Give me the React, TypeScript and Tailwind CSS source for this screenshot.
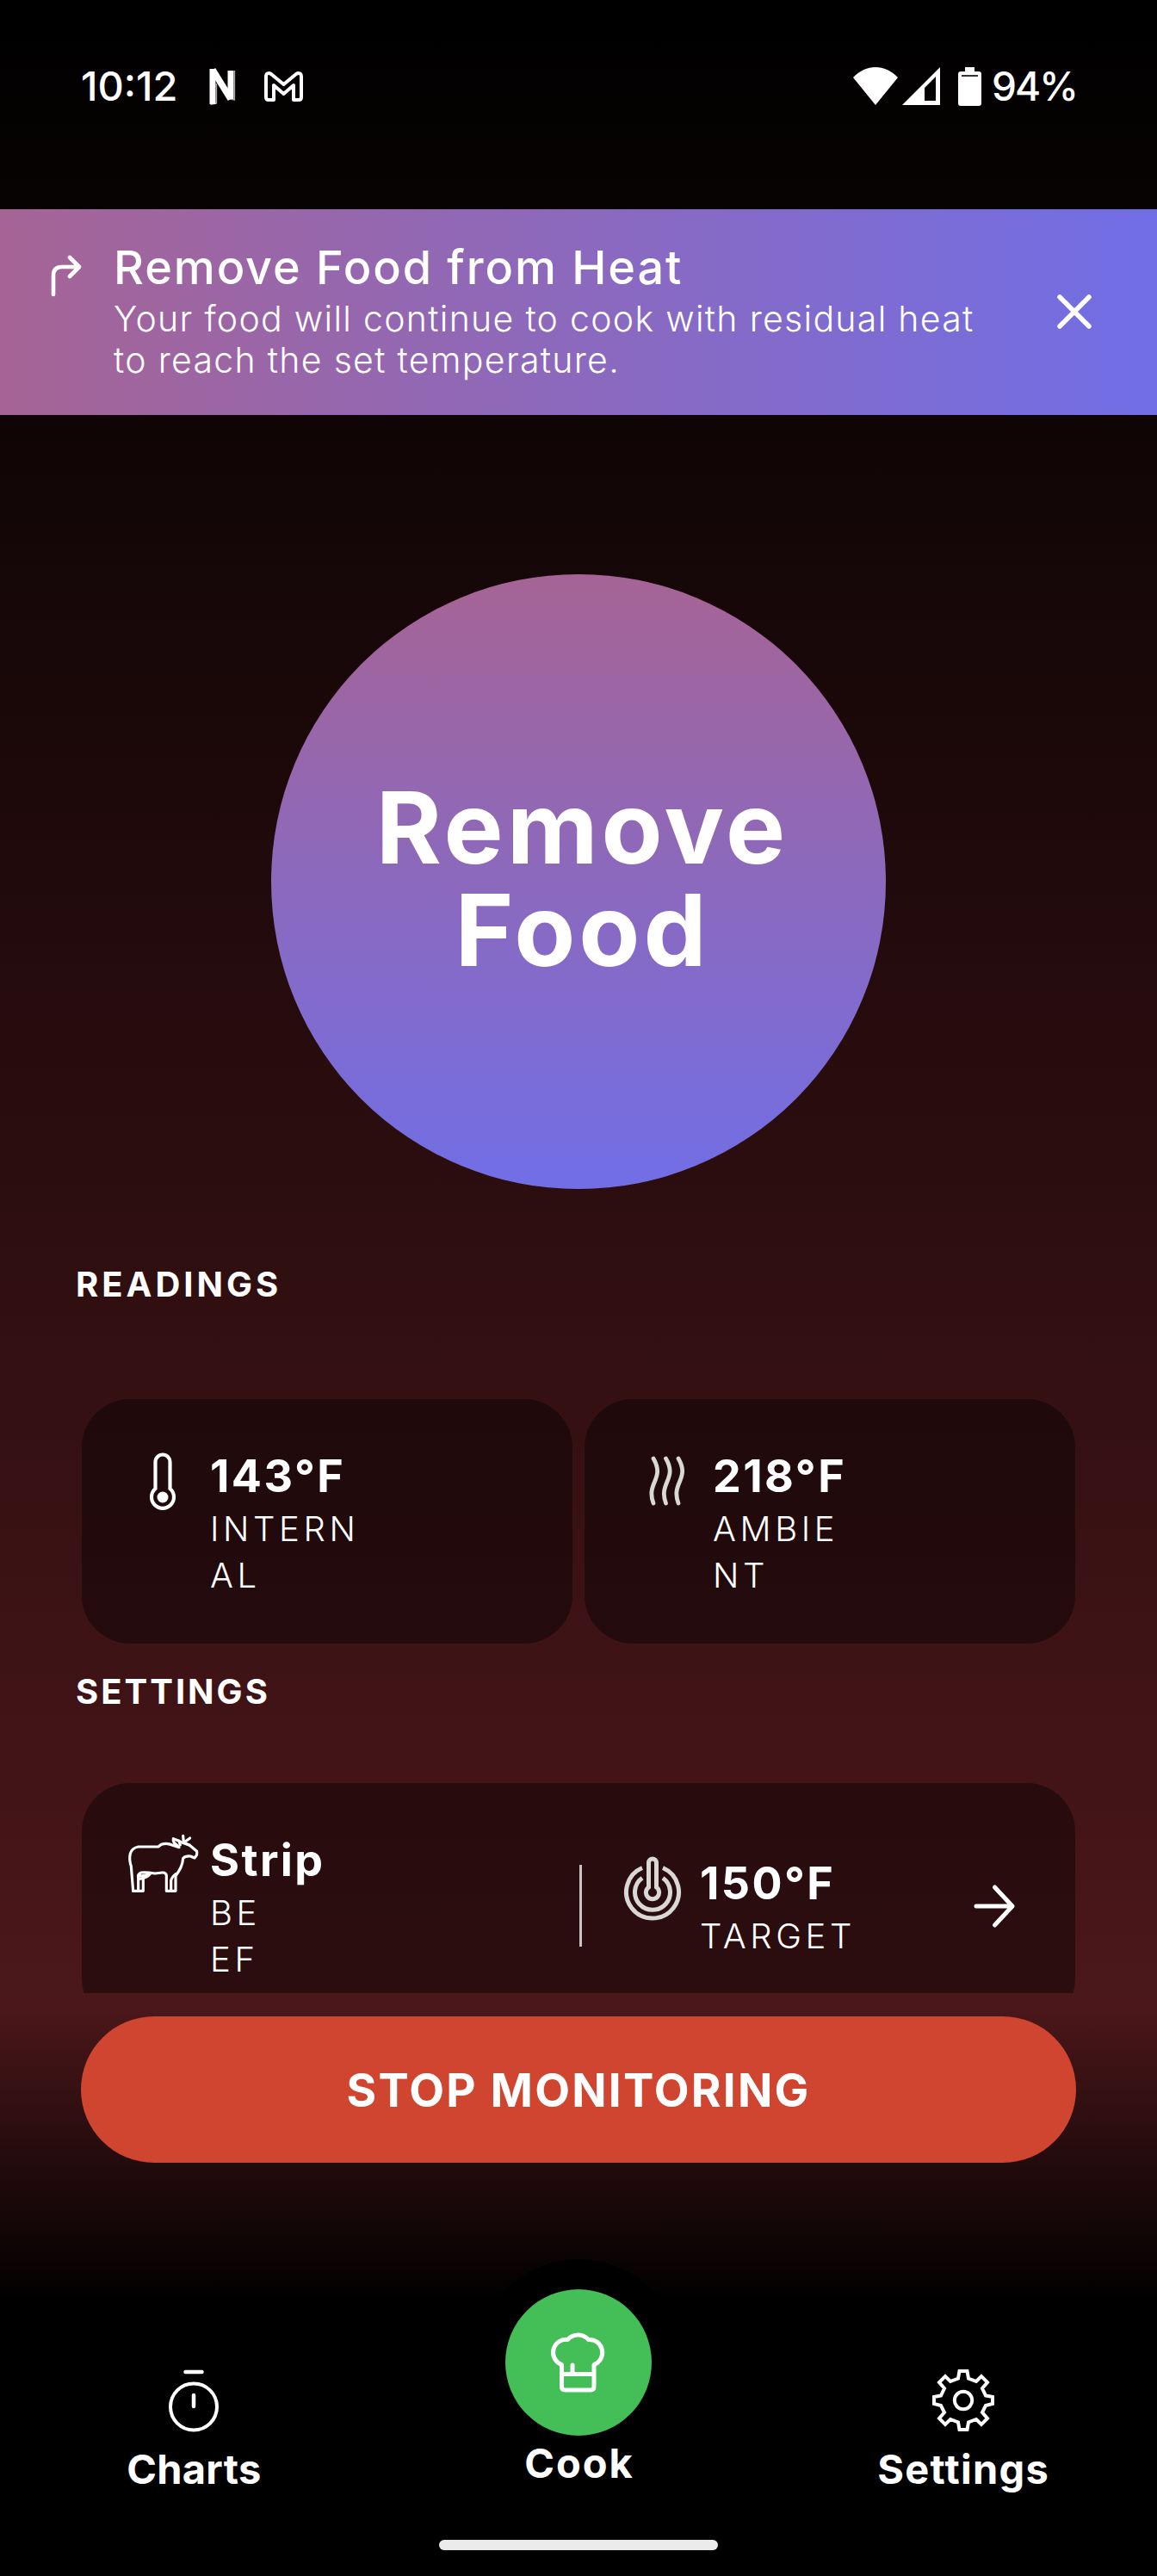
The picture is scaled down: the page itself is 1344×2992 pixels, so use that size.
import type { ReactNode } from "react";

interface ReadingProps {
  icon: ReactNode;
  value: string;
  lines: string[];
  className?: string;
}

function Reading({ icon, value, lines, className = "" }: ReadingProps) {
  return (
    <div className={`flex items-start ${className}`}>
      <div className="flex w-[110px] flex-shrink-0 justify-center">{icon}</div>
      <div className="ml-[5px] whitespace-nowrap">
        <div className="text-[52px] leading-[64px] font-bold tracking-[2.4px]">{value}</div>
        <div className="mt-[2px] text-[40px] leading-[54px] font-light tracking-[4.6px]">
          {lines.map((line) => (
            <div key={line}>{line}</div>
          ))}
        </div>
      </div>
    </div>
  );
}

function StatusBar() {
  return (
    <header className="flex h-[243px] items-start pt-[70px] pr-[95px] pl-[94px]">
      <span className="w-[147px] text-[47px] leading-[60px] font-medium">10:12</span>
      <svg className="mt-[7px] h-[48px] w-[34px]" viewBox="0 0 34 48" fill="none">
        <path d="M10.500 20v23l-7 1.500M31.500 5v34l-6-1" stroke="#aaa" strokeWidth="1.300" />
        <path d="M6 3v41M27 5v33" stroke="#fff" strokeWidth="7" />
        <path d="M6 4L27 38" stroke="#fff" strokeWidth="7.500" />
      </svg>
      <svg className="mt-[12px] ml-[31px] h-[37px] w-[47px]" viewBox="0 0 47 37" fill="none" stroke="#fff" strokeWidth="4" strokeLinejoin="round">
        <path d="M3 31V7C3 3 6 2 9 4L23.500 16L38 4C41 2 44 3 44 7V31C44 33 43 34 41 34H35V17L23.500 27L12 17V34H6C4 34 3 33 3 31Z" />
      </svg>
      <svg className="mt-[8px] ml-auto h-[44px] w-[52px]" viewBox="0 0 52 44" fill="#fff">
        <path d="M0 12C15-4 37-4 52 12L26 44Z" />
      </svg>
      <svg className="mt-[8px] ml-[5px] h-[44px] w-[44px]" viewBox="0 0 44 44" fill="#fff">
        <path fillRule="evenodd" d="M0 44L44 0V44ZM26 24V39H39V11Z" />
      </svg>
      <svg className="mt-[8px] ml-[21px] h-[45px] w-[27px]" viewBox="0 0 27 45">
        <path d="M8 0H19V5H24Q27 5 27 8V42Q27 45 24 45H3Q0 45 0 42V8Q0 5 3 5H8Z" fill="#fff" />
        <path d="M4 10H23" stroke="#333" strokeWidth="2" />
      </svg>
      <span className="ml-[12px] w-[97px] text-[46px] leading-[60px] font-medium tracking-[-2px] whitespace-nowrap">94%</span>
    </header>
  );
}

function Banner() {
  return (
    <section className="flex h-[239px] items-start bg-[linear-gradient(to_right,#a66495,#716ee6)] pl-[59px]">
      <svg className="mt-[52px] h-[50px] w-[36px]" viewBox="0 0 36 50" fill="none" stroke="#fff" strokeWidth="4.600" strokeLinecap="round" strokeLinejoin="round">
        <path d="M3 47V25Q3 15 13 15H33M22 4L33 15L22 26" />
      </svg>
      <div className="mt-[36px] ml-[37px] whitespace-nowrap">
        <h1 className="text-[54px] leading-[64px] font-medium tracking-[1.9px]">Remove Food from Heat</h1>
        <p className="mt-[3px] text-[41px] leading-[48px] font-light tracking-[1.3px]">
          Your food will continue to cook with residual heat
          <br />
          to reach the set temperature.
        </p>
      </div>
      <svg className="mt-[98px] mr-[75px] ml-auto h-[42px] w-[42px]" viewBox="0 0 42 42" stroke="#fff" strokeWidth="5.500" strokeLinecap="round">
        <path d="M4 4L38 38M38 4L4 38" />
      </svg>
    </section>
  );
}

function ThermometerIcon() {
  return (
    <svg className="mt-[3px] ml-[10px] h-[68px] w-[32px]" viewBox="0 0 32 68" fill="none">
      <path d="M7.500 43V12a8.500 8.500 0 0 1 17 0v31a13 13 0 1 1-17 0Z" stroke="#fff" strokeWidth="4.200" />
      <circle cx="16" cy="53" r="6.500" fill="#fff" />
    </svg>
  );
}

function HeatIcon() {
  return (
    <svg className="mt-[7px] ml-[13px] h-[60px] w-[44px]" viewBox="0 0 44 60" fill="none" stroke="#d9d8d5" strokeWidth="4.800" strokeLinecap="round">
      <path d="M6 4C20 28-3 32 6 56M20.500 4C34.500 28 11.500 32 20.500 56M35 4C49 28 26 32 35 56" />
    </svg>
  );
}

function CowIcon() {
  return (
    <svg className="-mt-[8px] -mr-[12px] h-[86px] w-[100px] flex-shrink-0" viewBox="0 0 300 258" fill="none" stroke="#fff" strokeWidth="9.500" strokeLinejoin="round" strokeLinecap="round">
      <path d="M44 226L37 140Q29 116 34 96Q40 76 62 72H132L142 64Q162 57 180 66L204 74L194 64Q182 56 184 44L204 52L216 58L240 66L266 88V100L258 111L244 105Q226 103 218 112C216 140 204 156 192 174V226H160V172Q158 161 146 162L120 165Q90 160 72 162Q60 166 62 180" />
      <path d="M44 226H79V184M62 180V222M64 184Q92 182 104 166M62 172Q80 176 98 168M176 222V190Q178 178 194 166" />
      <path d="M204 52L208 66M218 34L220 58L242 42M220 58L240 66" />
    </svg>
  );
}

function TargetIcon() {
  return (
    <svg className="ml-[9px] h-[76px] w-[68px]" viewBox="0 0 68 76" fill="none" stroke="#d9d8d5" strokeWidth="5">
      <path d="M22 13.500A30.500 30.500 0 1 0 46 13.500M22 25.200A20.500 20.500 0 1 0 46 25.200" />
      <path d="M29.500 36V7.500a4.500 4.500 0 0 1 9 0V36a7.600 7.600 0 1 1-9 0Z" />
    </svg>
  );
}

function TimerIcon() {
  return (
    <svg className="h-[74px] w-[60px]" viewBox="0 0 60 74" fill="none" stroke="#fff" strokeWidth="4" strokeLinecap="round">
      <circle cx="30" cy="44.500" r="27" />
      <path d="M20.500 4H39.500M30 31V44" strokeWidth="4.500" />
    </svg>
  );
}

function GearIcon() {
  return (
    <svg className="h-[74px] w-[74px]" viewBox="-37 -37 74 74" fill="none" stroke="#fff" strokeWidth="4">
      <circle r="10.200" />
      <path d="M-4.500-34H4.500L6-25.500L15-22L21-28L28-21L22-14L26-5.500L34-4V4L26 6L22 14L28 21L21 28L15 22L6 25.500L4.500 34H-4.500L-6 25.500L-15 22L-21 28L-28 21L-22 14L-26 6L-34 4V-4L-26-5.500L-22-14L-28-21L-21-28L-15-22L-6-25.500Z" />
    </svg>
  );
}

function ChefHatIcon() {
  return (
    <svg className="mt-[-1px] h-[72px] w-[68px]" viewBox="0 0 68 72" fill="none" stroke="#fff" strokeWidth="5" strokeLinecap="round" strokeLinejoin="round">
      <path d="M14.500 38.500A15 15 0 0 1 21.500 9.500A15 14 0 0 1 45.500 9.500A15 15 0 0 1 52 38.500V64Q52 68 48 68H18.500Q14.500 68 14.500 64ZM14.500 49.500H52M27 39V49" />
    </svg>
  );
}

export default function App() {
  return (
    <div className="flex h-[2992px] w-[1344px] flex-col overflow-hidden bg-[linear-gradient(to_bottom,#000_0,#4b171a_2330px,#000_2675px)] font-['Inter',sans-serif] text-white">
      <StatusBar />
      <Banner />

      <main className="h-[1833px] flex-shrink-0 overflow-hidden px-[95px] pt-[185px]">
        <div className="mx-auto flex h-[714px] w-[714px] items-center justify-center rounded-full bg-[linear-gradient(to_bottom,#a66495,#716ee6)] pb-[6px] pl-[9px] text-center text-[116px] leading-[119px] font-bold tracking-[4px]">
          Remove
          <br />
          Food
        </div>

        <h2 className="mt-[86px] -ml-[7px] text-[40px] leading-[49px] font-bold tracking-[4px]">READINGS</h2>
        <div className="mt-[109px] grid grid-cols-2 gap-[14px]">
          <div className="h-[284px] rounded-[56px] bg-black/40 pt-[58px] pl-[34px]">
            <Reading icon={<ThermometerIcon />} value="143°F" lines={["INTERN", "AL"]} />
          </div>
          <div className="h-[284px] rounded-[56px] bg-black/40 pt-[58px] pl-[34px]">
            <Reading icon={<HeatIcon />} value="218°F" lines={["AMBIE", "NT"]} />
          </div>
        </div>

        <h2 className="mt-[31px] -ml-[7px] text-[40px] leading-[49px] font-bold tracking-[3px]">SETTINGS</h2>
        <div className="mt-[82px] flex h-[284px] items-start rounded-[56px] bg-black/40">
          <Reading className="w-[578px] pt-[58px] pl-[34px]" icon={<CowIcon />} value="Strip" lines={["BE", "EF"]} />
          <div className="mt-[95px] h-[95px] w-[3px] bg-[#c9c3c3]" />
          <Reading className="pt-[85px] pl-[22px]" icon={<TargetIcon />} value="150°F" lines={["TARGET"]} />
          <svg className="mt-[117px] mr-[69px] ml-auto h-[52px] w-[50px]" viewBox="0 0 50 52" fill="none" stroke="#fff" strokeWidth="5" strokeLinecap="round" strokeLinejoin="round">
            <path d="M4 26H46M25.500 4L46 26L25.500 48" />
          </svg>
        </div>
      </main>

      <button className="mx-[94px] mt-[27px] h-[170px] flex-shrink-0 rounded-full bg-[#d0452f] pt-[4px] text-[53px] font-bold tracking-[2.2px]">
        STOP MONITORING
      </button>

      <nav className="mt-[112px] grid flex-1 grid-cols-3 px-[2px] text-center text-[47px] leading-[60px] font-bold">
        <div className="flex flex-col items-center pt-[127px]">
          <TimerIcon />
          <span className="mt-[13px] tracking-[0.3px]">Charts</span>
        </div>
        <div className="flex flex-col items-center">
          <div className="flex h-[240px] w-[240px] flex-shrink-0 items-center justify-center rounded-full bg-black">
            <div className="flex h-[170px] w-[170px] items-center justify-center rounded-full bg-[#44be56]">
              <ChefHatIcon />
            </div>
          </div>
          <span className="-mt-[33px] pl-[2px] tracking-[2px]">Cook</span>
          <div className="mt-[59px] h-[12px] w-[324px] rounded-full bg-[#ebebeb]" />
        </div>
        <div className="flex flex-col items-center pt-[127px]">
          <GearIcon />
          <span className="mt-[13px] pl-[1px] tracking-[1.3px]">Settings</span>
        </div>
      </nav>
    </div>
  );
}
